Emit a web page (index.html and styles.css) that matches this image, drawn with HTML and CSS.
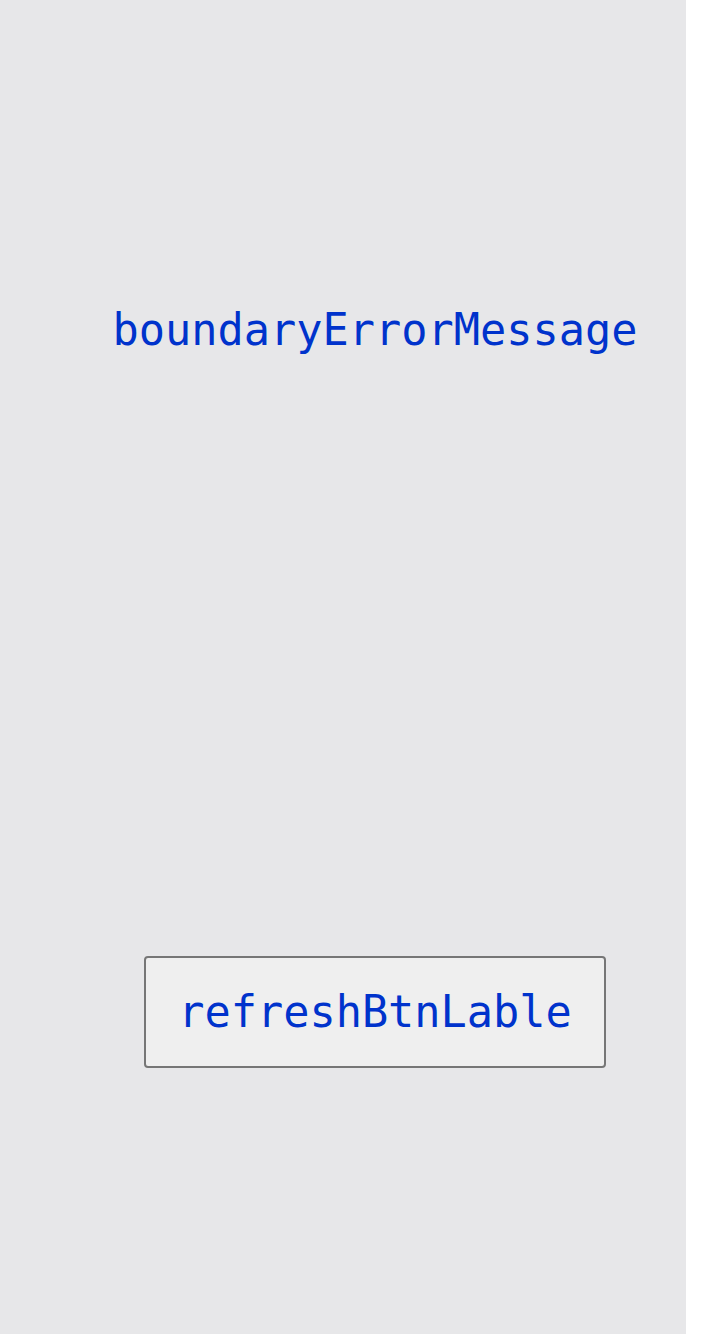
FILE: index.html
```html
<!DOCTYPE html>
<html>
<head>
<meta charset="utf-8">
<link rel="stylesheet" href="styles.css">
</head>
<body>
<div class="panel">
  <div class="column">
    <p class="message">boundaryErrorMessage</p>
    <button class="refresh">refreshBtnLable</button>
  </div>
</div>
</body>
</html>
```
FILE: styles.css
```css
html, body {
  margin: 0;
  padding: 0;
  background: #ffffff;
}
.panel {
  width: 686px;
  height: 1334px;
  background: #e7e7e9;
  overflow: hidden;
}
.column {
  width: 750px;
  display: flex;
  flex-direction: column;
  align-items: center;
  padding-top: 300px;
  font-family: "DejaVu Sans Mono", monospace;
  color: #0033cc;
}
.message {
  margin: 0;
  font-size: 43.6px;
  line-height: 60px;
}
.refresh {
  margin-top: 596px;
  width: 462px;
  height: 112px;
  font-family: "DejaVu Sans Mono", monospace;
  font-size: 43.6px;
  color: #0033cc;
  background: #efefef;
  border: 2px solid #767676;
  border-radius: 4px;
  padding: 0;
}
```
